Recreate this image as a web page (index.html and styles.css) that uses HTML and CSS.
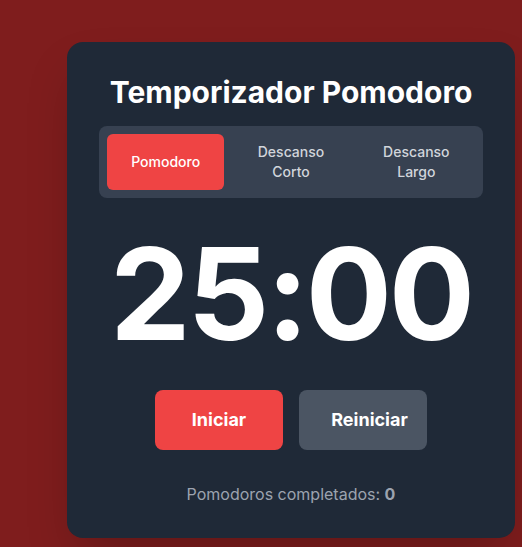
FILE: index.html
```html
<!DOCTYPE html>
<html lang="es">
<head>
<meta charset="utf-8">
<title>Temporizador Pomodoro</title>
<link rel="stylesheet" href="styles.css">
</head>
<body>
<main class="card">
  <h1 class="title">Temporizador Pomodoro</h1>
  <div class="tabs">
    <button class="tab active">Pomodoro</button>
    <button class="tab">Descanso<br>Corto</button>
    <button class="tab">Descanso<br>Largo</button>
  </div>
  <div class="timer">25:00</div>
  <div class="controls">
    <button class="btn btn-start">Iniciar</button>
    <button class="btn btn-reset">Reiniciar</button>
  </div>
  <p class="counter">Pomodoros completados: <span class="count">0</span></p>
</main>
</body>
</html>
```
FILE: styles.css
```css
* { box-sizing: border-box; }
html, body { margin: 0; }
body {
  background: #7f1d1d;
  font-family: Inter, "Noto Sans", sans-serif;
  min-height: 547px;
  padding: 42px 0 0 67px;
  overflow: hidden;
}
.card {
  width: 448px;
  background: #1f2937;
  border-radius: 16px;
  padding: 32px;
  box-shadow: 0 25px 50px -12px rgba(0,0,0,0.25);
  text-align: center;
}
.title {
  margin: 0 0 16px;
  font-size: 30px;
  line-height: 36px;
  font-weight: 700;
  color: #ffffff;
}
.tabs {
  display: flex;
  gap: 8px;
  padding: 8px;
  background: #374151;
  border-radius: 8px;
  margin-bottom: 32px;
}
.tab {
  flex: 1;
  border: 0;
  background: transparent;
  color: #d1d5db;
  font-family: inherit;
  font-size: 14px;
  line-height: 20px;
  font-weight: 500;
  padding: 8px;
  border-radius: 6px;
}
.tab.active {
  background: #ef4444;
  color: #ffffff;
}
.timer {
  font-size: 128px;
  line-height: 1;
  font-weight: 700;
  letter-spacing: -0.025em;
  color: #ffffff;
  margin-bottom: 32px;
}
.controls {
  display: flex;
  justify-content: center;
  gap: 16px;
  margin-bottom: 32px;
}
.btn {
  width: 128px;
  border: 0;
  border-radius: 8px;
  padding: 16px 0;
  font-family: inherit;
  font-size: 18px;
  line-height: 28px;
  font-weight: 700;
  color: #ffffff;
}
.btn-start { background: #ef4444; }
.btn-reset { background: #4b5563; padding-left: 13px; }
.counter {
  margin: 0;
  font-size: 16px;
  line-height: 24px;
  color: #9ca3af;
}
.count { font-weight: 700; }
```
